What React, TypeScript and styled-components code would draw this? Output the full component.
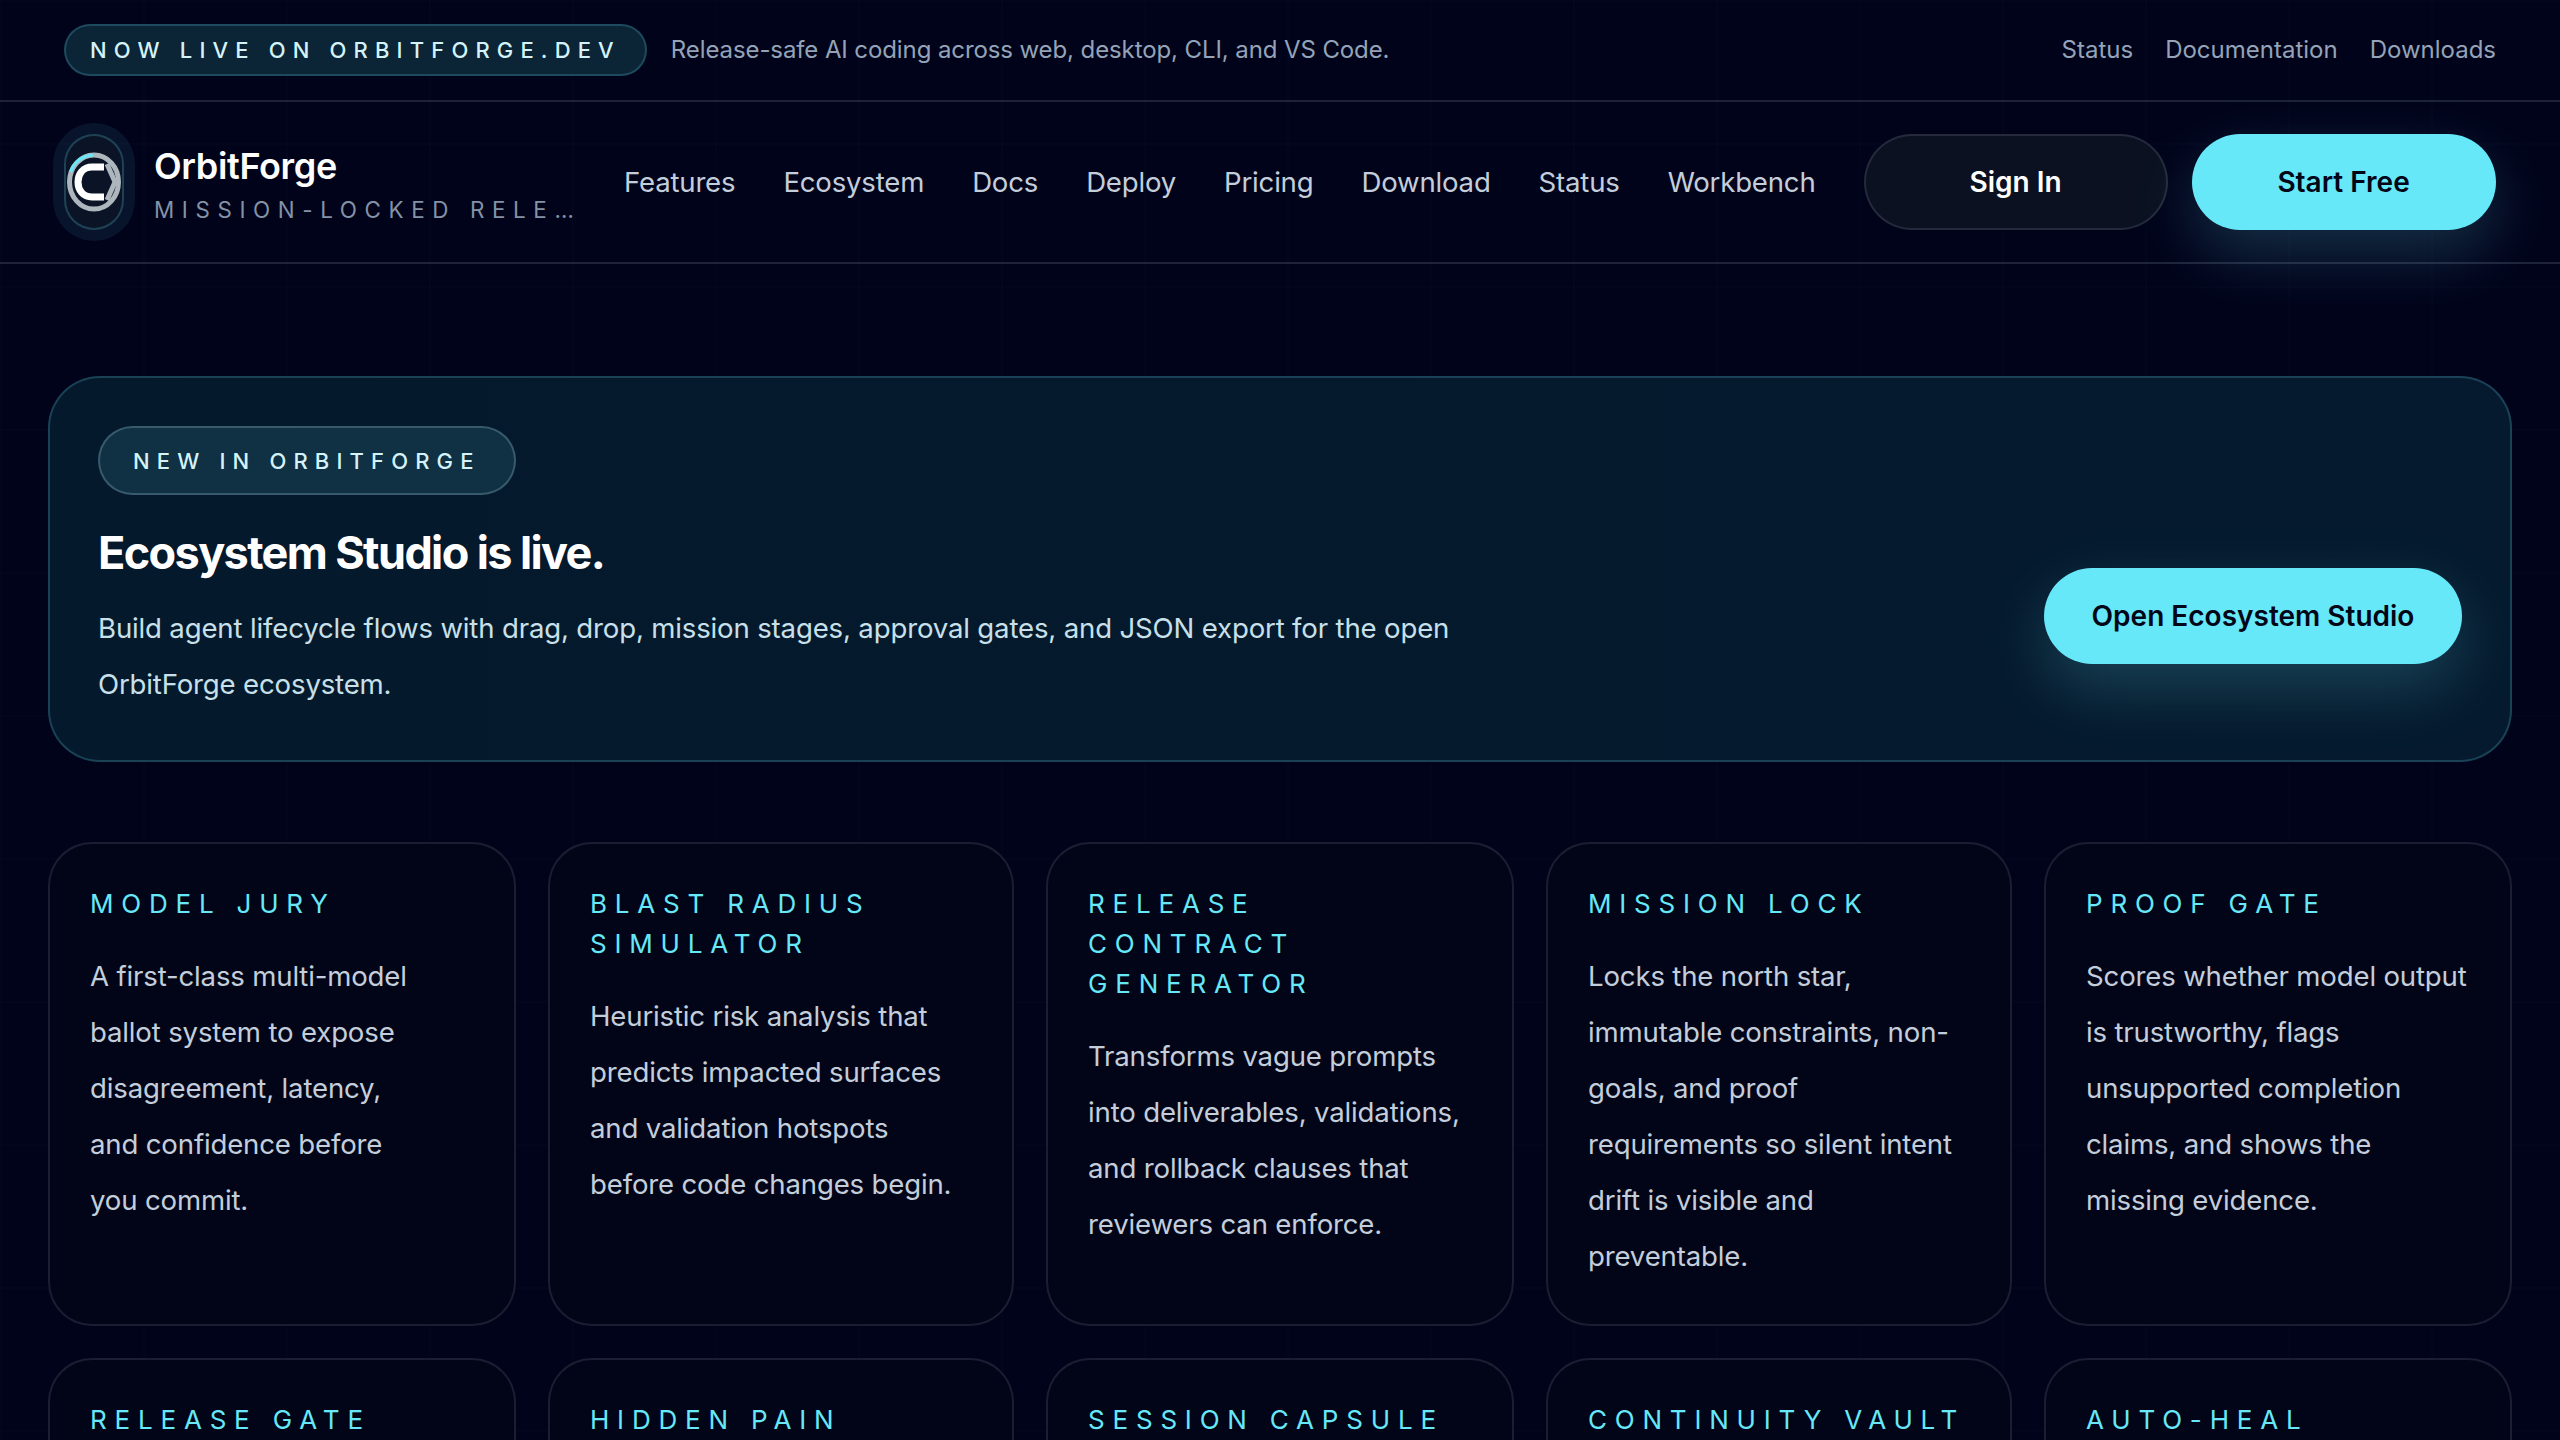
import styled, { createGlobalStyle } from 'styled-components'

const GlobalStyle = createGlobalStyle`
  html, body {
    margin: 0;
    height: 1440px;
    overflow: hidden;
    background: #01031a;
  }
  * { box-sizing: border-box; }
  #root {
    font-family: Inter, "Liberation Sans", sans-serif;
    color: #e2e8f0;
  }
`

const Page = styled.div`
  height: 1440px;
  overflow: hidden;
  background-color: #01031a;
  background-image:
    linear-gradient(rgba(103, 232, 249, 0.012) 2px, transparent 2px),
    linear-gradient(90deg, rgba(103, 232, 249, 0.012) 2px, transparent 2px);
  background-size: 143px 143px;
`

const TopBar = styled.div`
  height: 102px;
  padding: 0 64px;
  display: flex;
  align-items: center;
  justify-content: space-between;
  border-bottom: 2px solid rgba(148, 163, 184, 0.2);
`

const TopLeft = styled.div`
  display: flex;
  align-items: center;
  gap: 24px;
`

const LivePill = styled.span`
  height: 52px;
  padding: 0 24px;
  display: flex;
  align-items: center;
  border-radius: 26px;
  border: 2px solid rgba(103, 232, 249, 0.2);
  background: #0b2436;
  color: #d4f3f9;
  font-size: 22px;
  font-weight: 500;
  letter-spacing: 0.325em;
  white-space: nowrap;
`

const Tagline = styled.span`
  padding-bottom: 2px;
  color: #94a3b8;
  font-size: 24px;
  letter-spacing: -0.1px;
`

const TopLinks = styled.div`
  display: flex;
  gap: 32px;
  padding-bottom: 2px;
`

const TopLink = styled.a`
  color: #94a3b8;
  font-size: 24px;
`

const NavBar = styled.nav`
  height: 162px;
  padding: 0 64px;
  display: flex;
  align-items: center;
  border-bottom: 2px solid rgba(148, 163, 184, 0.2);
`

const Brand = styled.div`
  width: 512px;
  flex: none;
  display: flex;
  align-items: center;
  gap: 30px;
`

const LogoBox = styled.div`
  width: 60px;
  height: 96px;
  flex: none;
  display: flex;
  align-items: center;
  justify-content: center;
  border-radius: 30px;
  border: 2px solid rgba(103, 232, 249, 0.22);
  background: #0a1426;
  box-shadow: 0 0 0 11px rgba(103, 232, 249, 0.08);
`

const BrandText = styled.div`
  min-width: 0;
  flex: 1;
  padding-top: 4px;
`

const BrandName = styled.div`
  color: #ffffff;
  font-size: 36px;
  font-weight: 600;
  line-height: 44px;
  letter-spacing: -0.01em;
`

const BrandSub = styled.div`
  margin-top: 7px;
  color: #8492a6;
  font-size: 22.4px;
  line-height: 30px;
  letter-spacing: 0.34em;
  white-space: nowrap;
  overflow: hidden;
  text-overflow: ellipsis;
`

const NavLinks = styled.div`
  margin-left: 48px;
  display: flex;
  gap: 48px;
`

const NavLink = styled.a`
  color: #c4cedb;
  font-size: 27.6px;
  font-weight: 400;
  letter-spacing: -0.2px;
`

const NavActions = styled.div`
  margin-left: 48px;
  display: flex;
  gap: 24px;
`

const GhostButton = styled.button`
  width: 304px;
  height: 96px;
  border-radius: 48px;
  border: 2px solid rgba(148, 163, 184, 0.18);
  background: #0b1120;
  color: #ffffff;
  font: 600 28px Inter, sans-serif;
`

const CyanButton = styled.button<{ $wide?: boolean }>`
  width: ${(p) => (p.$wide ? '418px' : '304px')};
  height: 96px;
  flex: none;
  margin-bottom: ${(p) => (p.$wide ? '48px' : '0')};
  border: 0;
  border-radius: 48px;
  background: #67e8f9;
  color: #020617;
  font: 600 28px Inter, sans-serif;
  box-shadow: 0 24px 64px rgba(103, 232, 249, 0.2);
`

const Main = styled.main`
  padding: 112px 48px 0 48px;
`

const Hero = styled.section`
  height: 386px;
  padding: 48px;
  display: flex;
  align-items: flex-end;
  justify-content: space-between;
  border-radius: 52px;
  border: 2px solid rgba(103, 232, 249, 0.2);
  background: linear-gradient(90deg, #05192c, #051a2e);
`

const HeroBody = styled.div`
  width: 1400px;
`

const HeroPill = styled.span`
  display: flex;
  width: fit-content;
  align-items: center;
  height: 69px;
  padding: 0 33px;
  border-radius: 35px;
  border: 2px solid rgba(148, 190, 205, 0.3);
  background: #103044;
  color: #d4f3f9;
  font-size: 22px;
  font-weight: 500;
  letter-spacing: 0.325em;
`

const HeroTitle = styled.h2`
  margin: 28px 0 17px 0;
  color: #ffffff;
  font-size: 45px;
  font-weight: 700;
  line-height: 60px;
  letter-spacing: -0.036em;
`

const HeroText = styled.p`
  margin: 0;
  color: #c8e0ea;
  font-size: 27.6px;
  line-height: 56px;
  letter-spacing: -0.17px;
`

const CardGrid = styled.div`
  margin-top: 80px;
  display: grid;
  grid-template-columns: 468px 466px 468px 466px 468px;
  gap: 32px;
`

const Card = styled.article`
  padding: 40px;
  border-radius: 44px;
  border: 2px solid rgba(148, 163, 184, 0.16);
  background: #020518;
`

const CardTitle = styled.h3`
  margin: 0 0 24px 0;
  color: #67e8f9;
  font-size: 26px;
  font-weight: 400;
  line-height: 40px;
  letter-spacing: 0.3em;
`

const CardText = styled.p`
  margin: 0;
  color: #c4cedb;
  font-size: 27.6px;
  line-height: 56px;
  letter-spacing: -0.17px;
  text-wrap: pretty;
`

const LogoMark = () => (
  <svg width="54" height="60" viewBox="0 0 54 60" fill="none">
    <ellipse cx="27" cy="30" rx="24.5" ry="27" stroke="#aeb6bd" strokeWidth="5" />
    <path d="M3.5 20C7 10 15 4 26 3" stroke="#67e8f9" strokeWidth="3" />
    <path d="M37 15H25C16 15 11 22 11 30C11 38 16 45 25 45H37" stroke="#ffffff" strokeWidth="7" />
    <path d="M40 12L48 30L40 48" stroke="#aeb6bd" strokeWidth="5" />
  </svg>
)

const navItems = ['Features', 'Ecosystem', 'Docs', 'Deploy', 'Pricing', 'Download', 'Status', 'Workbench']

const cards = [
  {
    title: 'MODEL JURY',
    text: 'A first-class multi-model ballot system to expose disagreement, latency, and confidence before you commit.',
  },
  {
    title: 'BLAST RADIUS SIMULATOR',
    text: 'Heuristic risk analysis that predicts impacted surfaces and validation hotspots before code changes begin.',
  },
  {
    title: 'RELEASE CONTRACT GENERATOR',
    text: 'Transforms vague prompts into deliverables, validations, and rollback clauses that reviewers can enforce.',
  },
  {
    title: 'MISSION LOCK',
    text: 'Locks the north star, immutable constraints, non-goals, and proof requirements so silent intent drift is visible and preventable.',
  },
  {
    title: 'PROOF GATE',
    text: 'Scores whether model output is trustworthy, flags unsupported completion claims, and shows the missing evidence.',
  },
  { title: 'RELEASE GATE', text: '' },
  { title: 'HIDDEN PAIN', text: '' },
  { title: 'SESSION CAPSULE', text: '' },
  { title: 'CONTINUITY VAULT', text: '' },
  { title: 'AUTO-HEAL', text: '' },
]

export default function App() {
  return (
    <Page>
      <GlobalStyle />
      <TopBar>
        <TopLeft>
          <LivePill>NOW LIVE ON ORBITFORGE.DEV</LivePill>
          <Tagline>Release-safe AI coding across web, desktop, CLI, and VS Code.</Tagline>
        </TopLeft>
        <TopLinks>
          <TopLink>Status</TopLink>
          <TopLink>Documentation</TopLink>
          <TopLink>Downloads</TopLink>
        </TopLinks>
      </TopBar>
      <NavBar>
        <Brand>
          <LogoBox>
            <LogoMark />
          </LogoBox>
          <BrandText>
            <BrandName>OrbitForge</BrandName>
            <BrandSub>MISSION-LOCKED RELEASE ENGINEERING</BrandSub>
          </BrandText>
        </Brand>
        <NavLinks>
          {navItems.map((item) => (
            <NavLink key={item}>{item}</NavLink>
          ))}
        </NavLinks>
        <NavActions>
          <GhostButton>Sign In</GhostButton>
          <CyanButton>Start Free</CyanButton>
        </NavActions>
      </NavBar>
      <Main>
        <Hero>
          <HeroBody>
            <HeroPill>NEW IN ORBITFORGE</HeroPill>
            <HeroTitle>Ecosystem Studio is live.</HeroTitle>
            <HeroText>
              Build agent lifecycle flows with drag, drop, mission stages, approval gates, and JSON export for the open
              OrbitForge ecosystem.
            </HeroText>
          </HeroBody>
          <CyanButton $wide>Open Ecosystem Studio</CyanButton>
        </Hero>
        <CardGrid>
          {cards.map((card) => (
            <Card key={card.title}>
              <CardTitle>{card.title}</CardTitle>
              {card.text && <CardText>{card.text}</CardText>}
            </Card>
          ))}
        </CardGrid>
      </Main>
    </Page>
  )
}
